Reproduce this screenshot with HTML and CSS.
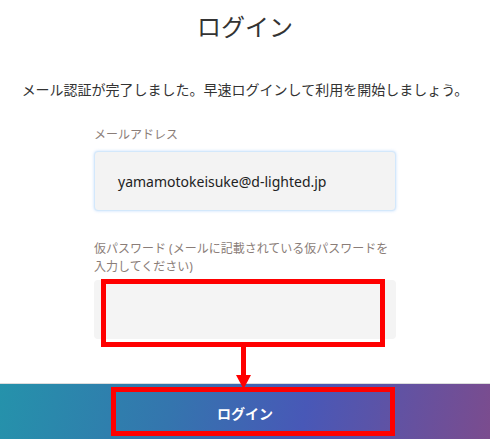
FILE: index.html
```html
<!DOCTYPE html>
<html lang="ja">
<head>
<meta charset="utf-8">
<title>ログイン</title>
<link rel="stylesheet" href="styles.css">
</head>
<body>
<main class="page">
  <h1 class="title">ログイン</h1>
  <p class="lead">メール認証が完了しました。早速ログインして利用を開始しましょう。</p>
  <form class="form">
    <label class="label">メールアドレス</label>
    <div class="input input-focus">yamamotokeisuke@d-lighted.jp</div>
    <label class="label label-two">仮パスワード (メールに記載されている仮パスワードを入力してください)</label>
    <div class="input input-pass"></div>
  </form>
</main>
<footer class="bar">
  <button class="btn" type="button">ログイン</button>
</footer>
<svg class="annot" width="490" height="440" viewBox="0 0 490 440">
  <rect x="103.5" y="281.5" width="279" height="63" fill="none" stroke="#ff0000" stroke-width="5"/>
  <rect x="241" y="347" width="5" height="30" fill="#ff0000"/>
  <polygon points="236,375 251,375 243.5,389" fill="#ff0000"/>
  <rect x="113.5" y="389.5" width="279" height="44" fill="none" stroke="#ff0000" stroke-width="5"/>
</svg>
</body>
</html>
```

FILE: styles.css
```css
* { box-sizing: border-box; }
html, body { margin: 0; padding: 0; }
body {
  width: 490px;
  height: 440px;
  overflow: hidden;
  position: relative;
  background: #ffffff;
  font-family: "Noto Sans", "Noto Sans CJK JP", sans-serif;
  color: #333333;
}
.page {
  display: flex;
  flex-direction: column;
  align-items: center;
}
.title {
  margin: 0;
  padding-top: 9px;
  font-size: 24px;
  line-height: 36px;
  font-weight: 400;
  color: #333333;
}
.lead {
  margin: 35px 0 0;
  font-size: 14px;
  line-height: 20px;
  color: #333333;
  white-space: nowrap;
}
.form {
  width: 302px;
  display: flex;
  flex-direction: column;
}
.label {
  margin-top: 26px;
  font-size: 12px;
  line-height: 18px;
  color: #8a7d78;
}
.label-two {
  margin-top: 29px;
}
.input {
  margin-top: 7px;
  height: 60px;
  border-radius: 4px;
  background: #f3f3f3;
  font-size: 14px;
  color: #222222;
  display: flex;
  align-items: center;
  padding-left: 23px;
}
.input-focus {
  border: 1px solid #d3e8fb;
  box-shadow: 0 0 3px rgba(120, 180, 250, 0.45);
}
.input-pass {
  margin-top: 4px;
  height: 59px;
  background: #f4f4f4;
}
.bar {
  margin-top: 44px;
  height: 56px;
  border-top: 1px solid #dcdcdc;
  background: linear-gradient(100deg, #2592ab 0%, #3475ae 35%, #4858b7 62%, #7b4c8e 100%);
  display: flex;
  justify-content: center;
  align-items: center;
}
.btn {
  width: 284px;
  height: 49px;
  margin-top: 2px;
  border: none;
  background: transparent;
  color: #ffffff;
  font-family: "Noto Sans CJK JP", sans-serif;
  font-size: 14px;
  font-weight: 700;
}
.annot {
  position: absolute;
  left: 0;
  top: 0;
  pointer-events: none;
}
```
